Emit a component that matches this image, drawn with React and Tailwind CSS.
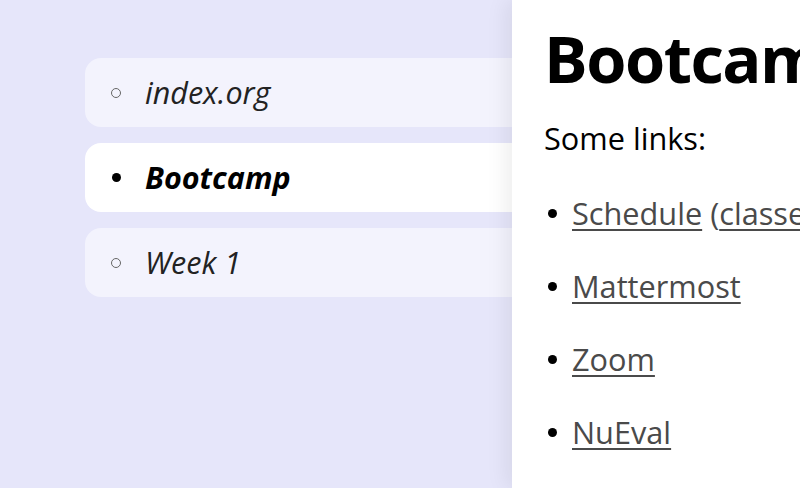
import React from 'react';

const navItems = [
  { label: 'index.org', active: false },
  { label: 'Bootcamp', active: true },
  { label: 'Week 1', active: false },
];

const links = [
  { label: 'Schedule', extra: 'classes' },
  { label: 'Mattermost' },
  { label: 'Zoom' },
  { label: 'NuEval' },
];

export default function App() {
  return (
    <div
      className="flex h-[488px] w-[800px] overflow-hidden bg-[#e6e6fa] text-black"
      style={{ fontFamily: '"Open Sans", "Noto Sans", sans-serif' }}
    >
      {/* Navigation */}
      <div className="w-[512px] shrink-0 pl-[85px] pt-[58px]">
        <div className="mr-[-40px] flex flex-col gap-[16px]">
          {navItems.map((item) => (
            <div
              key={item.label}
              className={
                'flex h-[69px] items-center rounded-[16px] pl-[24px] ' +
                (item.active ? 'bg-white' : 'bg-[#f3f3fd]')
              }
            >
              <span className="flex w-[36px] items-center">
                {item.active ? (
                  <span className="ml-[3px] h-[9px] w-[9px] rounded-full bg-black"></span>
                ) : (
                  <span className="ml-[2px] h-[10px] w-[10px] rounded-full border border-[#666]"></span>
                )}
              </span>
              <span
                className={
                  'text-[30.5px] italic leading-none ' + (item.active ? 'font-bold' : 'font-normal text-[#222]')
                }
              >
                {item.label}
              </span>
            </div>
          ))}
        </div>
      </div>

      {/* Content */}
      <div className="relative z-10 flex-1 bg-white pl-[32px] pt-[20px] shadow-[-6px_0_20px_rgba(0,0,0,0.07)]">
        <h1 className="whitespace-nowrap text-[65px] font-bold leading-[76px] tracking-[-1.5px]">Bootcamp</h1>
        <p className="mt-[22px] text-[30.7px] leading-[40px]">Some links:</p>
        <ul className="mt-[35px] flex flex-col gap-[33px]">
          {links.map((l) => (
            <li key={l.label} className="flex items-center whitespace-nowrap text-[30.7px] leading-[40px]">
              <span className="mr-[15px] ml-[4px] h-[9px] w-[9px] shrink-0 rounded-full bg-black"></span>
              <a href="#" className="text-[#4a4a4a] underline decoration-[1.5px] underline-offset-[4px]">
                {l.label}
              </a>
              {l.extra && (
                <>
                  <span className="ml-[8px] text-[#4a4a4a]">(</span>
                  <a href="#" className="text-[#4a4a4a] underline decoration-[1.5px] underline-offset-[4px]">
                    {l.extra}
                  </a>
                  <span className="text-[#4a4a4a]">)</span>
                </>
              )}
            </li>
          ))}
        </ul>
      </div>
    </div>
  );
}
